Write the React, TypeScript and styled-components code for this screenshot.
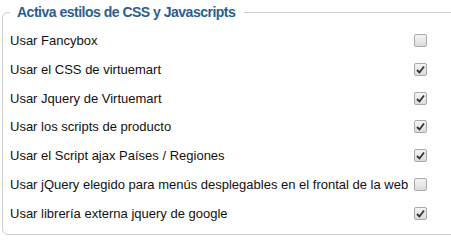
import styled, { createGlobalStyle } from 'styled-components';

const GlobalStyle = createGlobalStyle`
  html, body {
    margin: 0;
    padding: 0;
    background: #ffffff;
    overflow: hidden;
  }
  body {
    font-family: 'Liberation Sans', Arial, sans-serif;
  }
`;

const Fieldset = styled.fieldset`
  width: 470px;
  margin: 4px 0 0 2px;
  padding: 6px 0 6px 7px;
  border: 1px solid #cccccc;
  border-radius: 6px;
  box-sizing: border-box;
`;

const Legend = styled.legend`
  margin-left: 0;
  padding: 0 9px 0 7px;
  font-size: 14px;
  line-height: 16px;
  font-weight: 700;
  letter-spacing: -0.5px;
  color: #2a5d93;
`;

const Options = styled.div`
  display: grid;
  grid-template-columns: 404px 13px;
  grid-auto-rows: 28.83px;
  align-items: center;
`;

const Label = styled.label`
  font-size: 13px;
  color: #111111;
  white-space: nowrap;
`;

const Box = styled.span<{ $checked: boolean }>`
  width: 11px;
  height: 11px;
  border: 1px solid #a9a9a9;
  border-radius: 2px;
  background: linear-gradient(#f4f4f4, #dcdcdc);
  display: flex;
  align-items: center;
  justify-content: center;
  svg {
    display: ${(p) => (p.$checked ? 'block' : 'none')};
  }
`;

const options = [
  { label: 'Usar Fancybox', checked: false },
  { label: 'Usar el CSS de virtuemart', checked: true },
  { label: 'Usar Jquery de Virtuemart', checked: true },
  { label: 'Usar los scripts de producto', checked: true },
  { label: 'Usar el Script ajax Países / Regiones', checked: true },
  { label: 'Usar jQuery elegido para menús desplegables en el frontal de la web', checked: false },
  { label: 'Usar librería externa jquery de google', checked: true },
];

function Check({ checked }: { checked: boolean }) {
  return (
    <Box $checked={checked}>
      <svg width="9" height="9" viewBox="0 0 9 9">
        <path d="M1 5 L3.5 7.5 L8 1.5" fill="none" stroke="#333" strokeWidth="1.8" />
      </svg>
    </Box>
  );
}

export default function App() {
  return (
    <>
      <GlobalStyle />
      <Fieldset>
        <Legend>Activa estilos de CSS y Javascripts</Legend>
        <Options>
          {options.map((o) => (
            <>
              <Label key={o.label}>{o.label}</Label>
              <Check checked={o.checked} />
            </>
          ))}
        </Options>
      </Fieldset>
    </>
  );
}
